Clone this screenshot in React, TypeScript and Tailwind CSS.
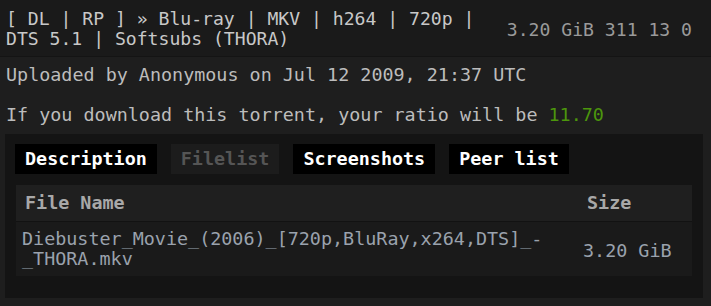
const mono = "font-['DejaVu_Sans_Mono','Liberation_Mono',monospace]";

function Tab({ label, active = true }: { label: string; active?: boolean }) {
  return (
    <div
      className={
        active
          ? "h-[30px] px-[10px] flex items-center bg-black text-white font-bold"
          : "h-[30px] px-[10px] flex items-center bg-[#1c1c1c] text-[#555555] font-bold"
      }
    >
      {label}
    </div>
  );
}

export default function App() {
  return (
    <div className={`${mono} w-[711px] h-[306px] bg-[#1e1e1e] text-[18.4px] leading-[20px] overflow-hidden`}>
      {/* titre + stats */}
      <div className="flex items-center gap-[20px] bg-[#1a1a1a] pl-[6px] pr-[19px] pt-[9px] pb-[7px] border-b border-[#141414] text-[18.1px]">
        <div className="flex-1 text-[#c8c8c8]">
          [ DL | RP ] » Blu-ray | MKV | h264 | 720p | DTS 5.1 | Softsubs (THORA)
        </div>
        <div className="shrink-0 text-[#9a9a9a] pt-[1px]">3.20 GiB 311 13 0</div>
      </div>

      <div className="pt-[8px] pl-[6px] text-[#bcbcbc]">
        <p>Uploaded by Anonymous on Jul 12 2009, 21:37 UTC</p>
        <p className="mt-[20px]">
          If you download this torrent, your ratio will be{" "}
          <span className="text-[#4c960c]">11.70</span>
        </p>
      </div>

      {/* panel */}
      <div className="mt-[9px] mx-[5px] w-[698px] h-[164px] bg-[#141414] px-[10px] pt-[10px]">
        <div className="flex gap-[14px]">
          <Tab label="Description" />
          <Tab label="Filelist" active={false} />
          <Tab label="Screenshots" />
          <Tab label="Peer list" />
        </div>

        <div className="mt-[11px] mx-px">
          <div className="grid grid-cols-[1fr_115px] h-[37px] items-center bg-[#1f1f1f] border-b border-[#121212] font-bold text-[#a8a8a8]">
            <div className="pl-[9px]">File Name</div>
            <div className="pl-[10px]">Size</div>
          </div>
          <div className="grid grid-cols-[1fr_115px] items-center bg-[#1a1a1a] h-[54px] text-[#9aa2ad]">
            <div className="pl-[6px] pr-[10px] break-words">
              Diebuster_Movie_(2006)_[720p,BluRay,x264,DTS]_-_THORA.mkv
            </div>
            <div className="pl-[6px] pt-[3px]">3.20 GiB</div>
          </div>
        </div>
      </div>
    </div>
  );
}
